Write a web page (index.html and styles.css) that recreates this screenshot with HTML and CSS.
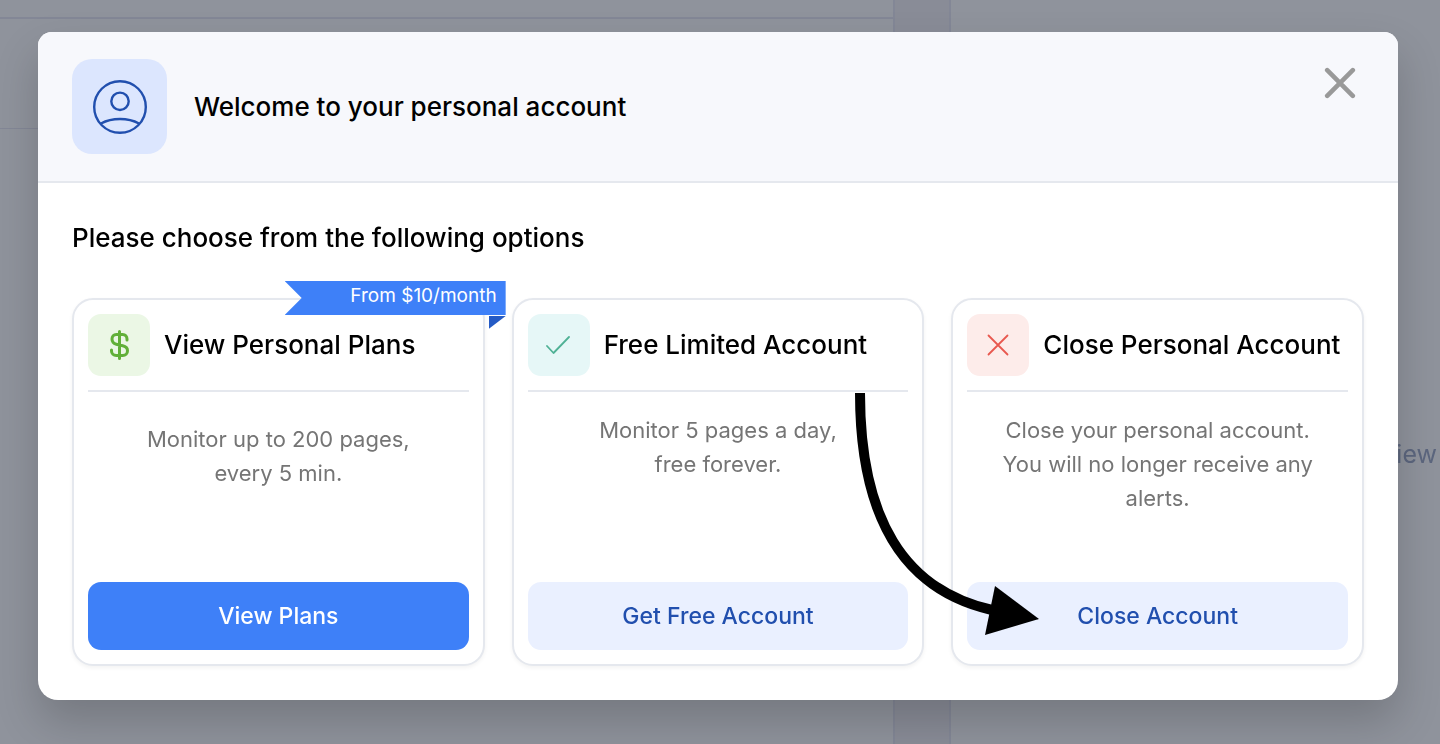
FILE: index.html
```html
<!DOCTYPE html>
<html lang="en">
<head>
<meta charset="utf-8">
<meta name="viewport" content="width=device-width, initial-scale=1">
<title>Personal account</title>
<link rel="stylesheet" href="styles.css">
</head>
<body>
<div class="page" aria-hidden="true">
  <div class="page-main">
    <div class="page-bar"></div>
    <div class="page-row"></div>
  </div>
  <div class="page-gutter"></div>
  <div class="page-side"><span>View</span></div>
</div>

<div class="overlay">
  <section class="modal" role="dialog" aria-labelledby="modal-title">
    <header class="modal-header">
      <span class="avatar">
        <svg width="56" height="56" viewBox="0 0 56 56" fill="none" stroke="currentColor" stroke-width="2.4">
          <circle cx="28" cy="28" r="25.8"/>
          <circle cx="28" cy="22.3" r="8.7"/>
          <path d="M9 44.500C20 38.500 36 38.500 47 44.500"/>
        </svg>
      </span>
      <h1 class="modal-title" id="modal-title">Welcome to your personal account</h1>
      <button class="close" type="button" aria-label="Close">
        <svg width="32" height="32" viewBox="0 0 32 32" fill="none" stroke="currentColor" stroke-width="4.600" stroke-linecap="round">
          <path d="M3.200 3.200l25.600 25.600M28.800 3.200L3.200 28.800"/>
        </svg>
      </button>
    </header>
    <div class="modal-body">
      <h2 class="prompt">Please choose from the following options</h2>
      <div class="cards">
        <article class="card card-featured">
          <div class="ribbon"><span>From $10/month</span></div>
          <div class="card-head">
            <span class="badge badge-green">
              <svg width="20" height="32" viewBox="0 0 20 32" fill="none" stroke="currentColor" stroke-width="3" stroke-linecap="round">
                <path d="M10.500 2.500v27M18 11v-1c0-2.600-1.700-4.500-4.300-4.500H7.300C4.700 5.500 3 7.400 3 10s1.500 4.500 4.300 5.200l6.400 1.600c2.900.7 4.800 2.300 4.800 4.900 0 2.900-2 4.800-4.800 4.800H7.300c-2.800 0-4.800-1.900-4.800-4.500v-1"/>
              </svg>
            </span>
            <h3 class="card-title">View Personal Plans</h3>
          </div>
          <p class="card-text">Monitor up to 200 pages,<br>every 5 min.</p>
          <button class="action action-primary" type="button">View Plans</button>
        </article>
        <article class="card card-free">
          <div class="card-head">
            <span class="badge badge-teal">
              <svg width="26" height="20" viewBox="0 0 26 20" fill="none" stroke="currentColor" stroke-width="1.800" stroke-linecap="round" stroke-linejoin="round">
                <path d="M1 11l6.500 7L23 2"/>
              </svg>
            </span>
            <h3 class="card-title">Free Limited Account</h3>
          </div>
          <p class="card-text">Monitor 5 pages a day,<br>free forever.</p>
          <button class="action" type="button">Get Free Account</button>
          <svg class="pointer" width="189" height="244" viewBox="0 0 189 244" aria-hidden="true">
            <path d="M8 0C8 126 52 197 140 217" fill="none" stroke="currentColor" stroke-width="10"/>
            <path d="M143 193L187 226L133 242z" fill="currentColor"/>
          </svg>
        </article>
        <article class="card">
          <div class="card-head">
            <span class="badge badge-red">
              <svg width="22" height="22" viewBox="0 0 22 22" fill="none" stroke="currentColor" stroke-width="1.800" stroke-linecap="round">
                <path d="M1.500 1.500l19 19M20.500 1.500l-19 19"/>
              </svg>
            </span>
            <h3 class="card-title">Close Personal Account</h3>
          </div>
          <p class="card-text">Close your personal account.<br>You will no longer receive any<br>alerts.</p>
          <button class="action" type="button">Close Account</button>
        </article>
      </div>
    </div>
  </section>
</div>
</body>
</html>
```
FILE: styles.css
```css
* {
  box-sizing: border-box;
}

body {
  margin: 0;
  min-height: 100vh;
  overflow: hidden;
  background: #8f939c;
  color: #000;
  font-family: Inter, "Open Sans", sans-serif;
}

h1,
h2,
h3,
p {
  margin: 0;
}

svg {
  display: block;
}

/* Dimmed page behind the dialog */
.page {
  position: fixed;
  inset: 0;
  display: grid;
  grid-template-columns: 62% 58px 1fr;
}

.page-bar {
  height: 19px;
  border-bottom: 2px solid #838796;
}

.page-row {
  height: 110px;
  border-bottom: 1px solid #838796;
}

.page-gutter {
  background: #898c97;
  border: solid #838796;
  border-width: 0 2px;
}

.page-side {
  display: flex;
  align-items: center;
  justify-content: flex-end;
  padding: 164px 3px 0 0;
  color: #5c667e;
  font-size: 25px;
}

/* Dialog */
.overlay {
  position: relative;
  padding: 32px 42px 44px 38px;
}

.modal {
  border-radius: 14px 14px 20px 20px;
  background: #fff;
  box-shadow: 0 22px 44px rgba(0, 0, 0, 0.18);
}

.modal-header {
  display: flex;
  align-items: center;
  gap: 27px;
  padding: 27px 42px 27px 34px;
  border-bottom: 2px solid #e5e8ee;
  border-radius: 14px 14px 0 0;
  background: #f7f8fc;
}

.avatar {
  display: grid;
  place-items: center;
  width: 95px;
  height: 95px;
  border-radius: 20px;
  background: #dce6fe;
  color: #214fae;
}

.modal-title {
  flex: 1;
  font-size: 26px;
  font-weight: 500;
  line-height: 34px;
}

.close {
  align-self: flex-start;
  margin-top: 8px;
  padding: 0;
  border: 0;
  background: none;
  color: #999;
}

.modal-body {
  padding: 38px 34px 34px;
}

.prompt {
  margin-bottom: 43px;
  font-size: 26px;
  font-weight: 500;
  line-height: 34px;
}

.cards {
  display: grid;
  grid-template-columns: repeat(3, 1fr);
  gap: 27px;
}

.card {
  position: relative;
  display: flex;
  flex-direction: column;
  min-height: 368px;
  padding: 14px;
  border: 2px solid #e5e8ee;
  border-radius: 21px;
  background: #fff;
  box-shadow: 0 2px 4px rgba(0, 0, 0, 0.05);
}

.card-free {
  z-index: 1;
}

.card-head {
  display: flex;
  align-items: center;
  gap: 14px;
  padding-bottom: 14px;
  border-bottom: 2px solid #e5e8ee;
}

.badge {
  display: grid;
  flex: none;
  place-items: center;
  width: 62px;
  height: 62px;
  border-radius: 13px;
}

.badge-green {
  background: #ebf7e5;
  color: #61b038;
}

.badge-teal {
  background: #e6f7f7;
  color: #4fb195;
}

.badge-red {
  background: #fdecea;
  color: #e8584f;
}

.card-title {
  font-size: 26px;
  font-weight: 500;
  line-height: 34px;
  white-space: nowrap;
}

.card-text {
  margin: 21px 0;
  color: #757575;
  font-size: 22px;
  line-height: 34px;
  text-align: center;
}

.card-featured .card-text {
  margin-top: 30px;
}

.action {
  height: 68px;
  margin-top: auto;
  border: 0;
  border-radius: 13px;
  background: #eaf0ff;
  color: #214fae;
  font-family: inherit;
  font-size: 23px;
  font-weight: 500;
}

.action-primary {
  background: #3e80f8;
  color: #fff;
}

/* Price ribbon with a folded corner */
.ribbon {
  position: absolute;
  top: -19px;
  right: -23px;
  color: #fff;
  font-size: 19px;
  line-height: 30px;
  text-align: right;
}

.ribbon span {
  display: block;
  width: 221px;
  padding: 0 9px 4px 0;
  background: #3e80f8;
  clip-path: polygon(0 0, 100% 0, 100% 100%, 0 100%, 17px 50%);
}

.ribbon::after {
  content: "";
  position: absolute;
  top: 35px;
  right: 0;
  width: 17px;
  height: 13px;
  background: #255bc5;
  clip-path: polygon(0 0, 100% 0, 0 100%);
}

.pointer {
  position: absolute;
  top: 93px;
  right: -119px;
  color: #000;
  pointer-events: none;
}
```
